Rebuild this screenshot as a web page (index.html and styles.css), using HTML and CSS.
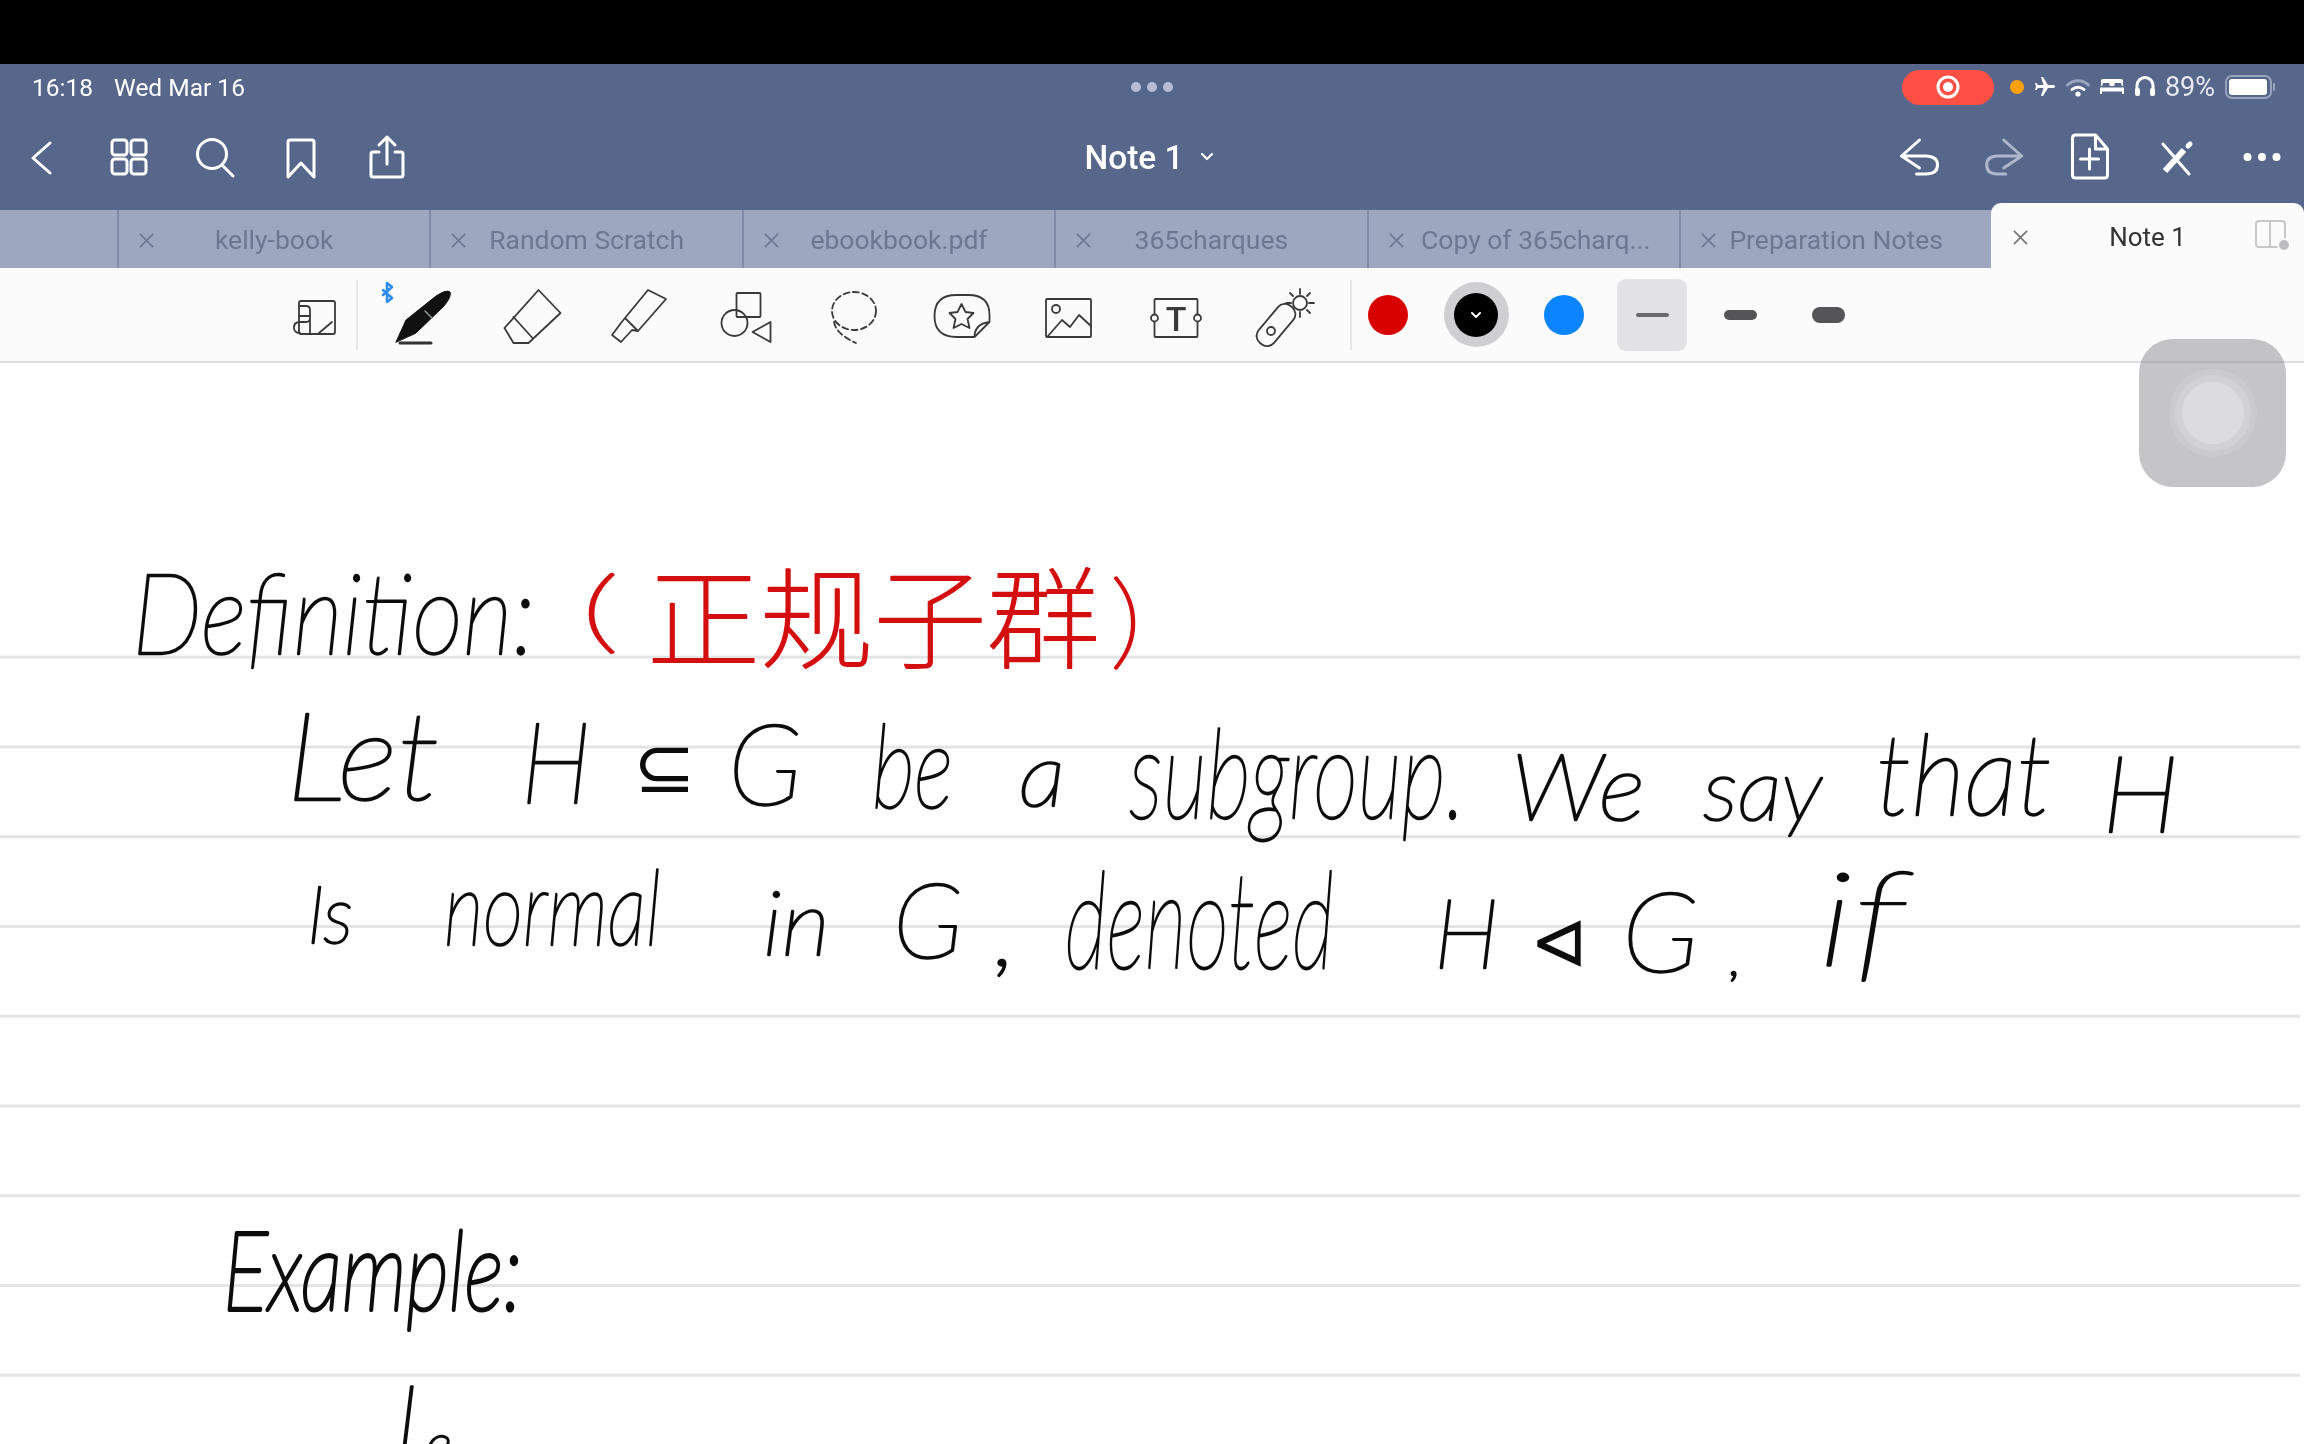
FILE: index.html
```html
<!DOCTYPE html>
<html lang="en">
<head>
<meta charset="utf-8">
<title>Note 1</title>
<link rel="stylesheet" href="styles.css">
</head>
<body>
<div class="screen">
  <div class="letterbox"></div>

  <header class="nav">
    <div class="status">
      <div class="status-left"><span>16:18</span><span>Wed Mar 16</span></div>
      <div class="grabber"><i></i><i></i><i></i></div>
      <div class="status-right">
        <div class="rec"><svg width="24" height="24" viewBox="0 0 24 24"><circle cx="12" cy="12" r="10" class="rec-ring"/><circle cx="12" cy="12" r="5" class="rec-dot"/></svg></div>
        <i class="cam-dot"></i>
        <svg class="st-icon" width="24" height="24" viewBox="0 0 24 24"><path transform="rotate(90 12 12)" fill="#fff" d="M21 16v-2l-8-5V3.5c0-.83-.67-1.5-1.5-1.5S10 2.67 10 3.5V9l-8 5v2l8-2.5V19l-2 1.5V22l3.5-1 3.5 1v-1.5L13 19v-5.5l8 2.5z"/></svg>
        <svg class="st-icon" width="24" height="22" viewBox="0 0 24 22"><path d="M1.5 9a15 15 0 0 1 21 0" class="wifi-dim"/><path d="M6 13.5a9 9 0 0 1 12 0" class="wifi"/><circle cx="12" cy="18" r="2.6" fill="#fff"/></svg>
        <svg class="st-icon" width="26" height="20" viewBox="0 0 26 20"><path fill="#fff" d="M4 2h18a2 2 0 0 1 2 2v5h-1l-1-3h-6l-1 3h-4l-1-3H4L3 9H2V4a2 2 0 0 1 2-2z"/><path fill="#fff" d="M1 10.500h24V17h-2v-2.500H3V17H1z"/></svg>
        <svg class="st-icon" width="22" height="24" viewBox="0 0 22 24"><path d="M3 17v-6.500a8 8 0 0 1 16 0V17" class="phones"/><rect x="1" y="13" width="5" height="8" rx="2" fill="#fff"/><rect x="16" y="13" width="5" height="8" rx="2" fill="#fff"/></svg>
        <span class="pct">89%</span>
        <svg class="battery" width="52" height="24" viewBox="0 0 52 24"><rect x="1" y="1" width="45" height="22" rx="6" class="batt-shell"/><rect x="4" y="4" width="38" height="16" rx="3" fill="#fff"/><path d="M49 9v6" class="batt-nub"/></svg>
      </div>
    </div>
    <div class="navrow">
      <div class="nav-left">
        <svg class="nav-icon back" viewBox="11 133 60 48"><path d="M50 143 33 158l17 15"/></svg>
        <svg class="nav-icon" viewBox="99 133 60 48"><rect x="112" y="140" width="15" height="15" rx="3"/><rect x="131" y="140" width="15" height="15" rx="3"/><rect x="112" y="159" width="15" height="15" rx="3"/><rect x="131" y="159" width="15" height="15" rx="3"/></svg>
        <svg class="nav-icon" viewBox="185 133 60 48"><circle cx="212" cy="154" r="14.500"/><path d="M222 165l11 11"/></svg>
        <svg class="nav-icon" viewBox="271 133 60 48"><path d="M288 177V142q0-2 2-2h22q2 0 2 2v35l-13-14z"/></svg>
        <svg class="nav-icon" viewBox="357 133 60 48"><path d="M379 152h-6q-2 0-2 2v21q0 2 2 2h28q2 0 2-2v-21q0-2-2-2h-6M387 164v-27M379 145l8-8 8 8"/></svg>
      </div>
      <div class="title"><span>Note 1</span><svg width="14" height="10" viewBox="0 0 14 10"><path d="M2 2l5 5 5-5"/></svg></div>
      <div class="nav-right">
        <svg class="nav-icon" viewBox="1888.500 133 60 48"><path d="M1919 140l-18 16 18 12M1901 156h24q12 0 12 9t-12 9h-9"/></svg>
        <svg class="nav-icon dim" viewBox="1974.300 133 60 48"><path d="M2004 140l18 16-18 12M2022 156h-24q-11 0-11 9t11 9h8"/></svg>
        <svg class="nav-icon" viewBox="2060.500 133 60 48"><path d="M2096 135h-20q-3 0-3 3v37q0 3 3 3h29q3 0 3-3v-26zM2096 135v14h12M2090 149v20M2081 159h18"/></svg>
        <svg class="nav-icon" viewBox="2145 133 60 48"><path d="M2162 144l26 30"/><path class="pen-stroke" d="M2164 171l19-21"/><path class="pen-tip" d="M2187 146l2-2"/></svg>
        <svg class="nav-icon filled" viewBox="2231.500 133 60 48"><circle cx="2247" cy="157" r="4"/><circle cx="2261.500" cy="157" r="4"/><circle cx="2276" cy="157" r="4"/></svg>
      </div>
    </div>
  </header>

  <nav class="tabs">
    <div class="tab-stub"></div>
    <div class="tab"><svg class="x" viewBox="0 0 16 16"><path d="M1 1l14 14M15 1 1 15"/></svg><span>kelly-book</span></div>
    <div class="tab"><svg class="x" viewBox="0 0 16 16"><path d="M1 1l14 14M15 1 1 15"/></svg><span>Random Scratch</span></div>
    <div class="tab"><svg class="x" viewBox="0 0 16 16"><path d="M1 1l14 14M15 1 1 15"/></svg><span>ebookbook.pdf</span></div>
    <div class="tab"><svg class="x" viewBox="0 0 16 16"><path d="M1 1l14 14M15 1 1 15"/></svg><span>365charques</span></div>
    <div class="tab long"><svg class="x" viewBox="0 0 16 16"><path d="M1 1l14 14M15 1 1 15"/></svg><span>Copy of 365charq...</span></div>
    <div class="tab"><svg class="x" viewBox="0 0 16 16"><path d="M1 1l14 14M15 1 1 15"/></svg><span>Preparation Notes</span></div>
    <div class="tab active"><svg class="x" viewBox="0 0 16 16"><path d="M1 1l14 14M15 1 1 15"/></svg><span>Note 1</span>
      <svg class="split" width="36" height="32" viewBox="0 0 36 32"><rect x="1" y="1" width="29" height="26" rx="3"/><path d="M15 1v26"/><circle cx="29" cy="25" r="6"/></svg>
    </div>
  </nav>

  <section class="toolbar">
    <svg class="tool tool-first" viewBox="272 275 84 80">
      <rect x="299" y="301" width="36" height="33" rx="2"/>
      <path d="M299 306h7q4 0 4 4v8q0 4-4 4h-6q-6 0-6 5.500t6 5.500M310 318v16M299 316h11M319 333l13-11"/>
    </svg>
    <i class="sep"></i>
    <div class="tools">
      <svg class="tool" viewBox="375 275 96 80">
        <path class="bt" d="M383 290l9 8-5 4V283l5 4-9 8"/>
        <path class="ink-fill" d="M396 342l10-22 30-24q11-7 14-4 2 4-6 14l-28 27z"/>
        <path class="pen-band" d="M425 311l7 7"/>
        <path class="pen-base" d="M400 343h31"/>
      </svg>
      <svg class="tool" viewBox="482.500 275 96 80">
        <path d="M538 290l22 23-32 30h-15l-9-15zM513 317l19 21"/>
      </svg>
      <svg class="tool" viewBox="590 275 96 80">
        <path d="M648 290l18 9-28 32-6-1-11 12-9-7 9-12 4-5zM625 318l13 13"/>
      </svg>
      <svg class="tool" viewBox="697.500 275 96 80">
        <rect x="736" y="293" width="24" height="24" rx="1"/><circle cx="734" cy="323" r="13"/><path d="M770 322v20l-18-10z"/>
      </svg>
      <svg class="tool" viewBox="805 275 96 80">
        <ellipse class="dash" cx="854" cy="311" rx="22" ry="19"/><path class="dash" d="M834 322q2 12 22 21"/>
      </svg>
      <svg class="tool" viewBox="912.500 275 96 80">
        <path d="M956 295h12q21 0 21 20v7l-15 15h-18q-22 0-22-21q0-21 22-21zM974 337q0-13 15-15"/>
        <path d="M961 304l4 8 8 1-6 6 2 9-8-4-8 4 2-9-6-6 8-1z"/>
      </svg>
      <svg class="tool" viewBox="1020 275 96 80">
        <rect x="1046" y="299" width="45" height="38" rx="1"/><circle cx="1056" cy="309" r="4"/><path d="M1048 336l14-16 8 7 9-12 12 11"/>
      </svg>
      <svg class="tool" viewBox="1127.500 275 96 80">
        <rect x="1154" y="299" width="43" height="38" rx="1"/><circle class="knob" cx="1154" cy="318" r="3.500"/><circle class="knob" cx="1197" cy="318" r="3.500"/>
        <text class="tool-t" x="1175.500" y="331">T</text>
      </svg>
      <svg class="tool" viewBox="1235 275 96 80">
        <rect x="-10" y="-24" width="20" height="48" rx="9" transform="translate(1276 325) rotate(40)"/>
        <circle cx="1271" cy="331" r="4"/><circle cx="1300" cy="303" r="7"/>
        <path d="M1300 289v5M1300 312v5M1286 303h5M1309 303h5M1290 293l3 3M1307 310l3 3M1310 293l-3 3"/>
      </svg>
    </div>
    <i class="sep sep-right"></i>
    <div class="swatches">
      <div class="swatch"><i class="dot red"></i></div>
      <div class="swatch"><i class="dot-ring"><i class="dot black"><svg width="12" height="8" viewBox="0 0 12 8"><path d="M2 2l4 4 4-4"/></svg></i></i></div>
      <div class="swatch"><i class="dot blue"></i></div>
      <div class="swatch selected"><i class="stroke thin"></i></div>
      <div class="swatch"><i class="stroke mid"></i></div>
      <div class="swatch"><i class="stroke thick"></i></div>
    </div>
  </section>

  <main class="canvas">
    <div class="ruled"></div>
    <svg class="ink" viewBox="0 363 2304 1081">
      <text x="132" y="654" textLength="403" lengthAdjust="spacingAndGlyphs" font-size="112">Definition:</text>
      <text class="red paren" x="581" y="642" textLength="38" lengthAdjust="spacingAndGlyphs" font-size="90">(</text>
      <text class="red cjk" x="647" y="660" textLength="453" lengthAdjust="spacingAndGlyphs" font-size="110">正规子群</text>
      <text class="red paren" x="1110" y="656" textLength="32" lengthAdjust="spacingAndGlyphs" font-size="105">)</text>

      <text x="286" y="800" textLength="154" lengthAdjust="spacingAndGlyphs" font-size="122">Let</text>
      <text x="521" y="803" textLength="70" lengthAdjust="spacingAndGlyphs" font-size="112">H</text>
      <text class="sym" x="633" y="792" textLength="63" lengthAdjust="spacingAndGlyphs" font-size="72">⊆</text>
      <text x="728" y="805" textLength="74" lengthAdjust="spacingAndGlyphs" font-size="112">G</text>
      <text x="872" y="808" textLength="81" lengthAdjust="spacingAndGlyphs" font-size="116">be</text>
      <text x="1019" y="806" textLength="46" lengthAdjust="spacingAndGlyphs" font-size="88">a</text>
      <text x="1129" y="818" textLength="336" lengthAdjust="spacingAndGlyphs" font-size="125">subgroup.</text>
      <text x="1511" y="820" textLength="134" lengthAdjust="spacingAndGlyphs" font-size="92">We</text>
      <text x="1703" y="820" textLength="119" lengthAdjust="spacingAndGlyphs" font-size="86">say</text>
      <text x="1876" y="815" textLength="176" lengthAdjust="spacingAndGlyphs" font-size="112">that</text>
      <text x="2102" y="832" textLength="77" lengthAdjust="spacingAndGlyphs" font-size="106">H</text>

      <text x="307" y="943" textLength="46" lengthAdjust="spacingAndGlyphs" font-size="80">Is</text>
      <text x="444" y="945" textLength="217" lengthAdjust="spacingAndGlyphs" font-size="104">normal</text>
      <text x="763" y="955" textLength="67" lengthAdjust="spacingAndGlyphs" font-size="90">in</text>
      <text x="893" y="958" textLength="70" lengthAdjust="spacingAndGlyphs" font-size="105">G</text>
      <text x="995" y="965" textLength="21" lengthAdjust="spacingAndGlyphs" font-size="90">,</text>
      <text x="1065" y="968" textLength="269" lengthAdjust="spacingAndGlyphs" font-size="135">denoted</text>
      <text x="1434" y="968" textLength="65" lengthAdjust="spacingAndGlyphs" font-size="96">H</text>
      <text class="sym" x="1530" y="968" textLength="58" lengthAdjust="spacingAndGlyphs" font-size="78">⊲</text>
      <text x="1622" y="972" textLength="77" lengthAdjust="spacingAndGlyphs" font-size="110">G</text>
      <text x="1730" y="975" textLength="11" lengthAdjust="spacingAndGlyphs" font-size="50">,</text>
      <text x="1818" y="965" textLength="88" lengthAdjust="spacingAndGlyphs" font-size="130">if</text>

      <text class="heavy" x="223" y="1310" textLength="299" lengthAdjust="spacingAndGlyphs" font-size="110">Example:</text>
      <text x="392" y="1471" font-size="120">L</text>
      <text x="425" y="1465" font-size="58">e</text>
    </svg>
  </main>

  <div class="assist"><i class="assist-core"></i></div>
</div>
</body>
</html>
```

FILE: styles.css
```css
* { box-sizing: border-box; }
html, body { margin: 0; padding: 0; background: #fff; }
i { display: block; font-style: normal; }

.screen {
  position: relative;
  width: 2304px;
  height: 1444px;
  overflow: hidden;
  display: flex;
  flex-direction: column;
  font-family: Roboto, "Liberation Sans", sans-serif;
  filter: blur(0.5px);
}

.letterbox { height: 64px; background: #000; flex: none; }

/* Navigation */
.nav { height: 146px; background: #57678b; color: #fff; flex: none; }

.status {
  height: 46px;
  display: grid;
  grid-template-columns: 1fr auto 1fr;
  align-items: center;
}
.status-left { display: flex; gap: 21px; padding-left: 32px; font-size: 24.500px; }
.grabber { display: flex; gap: 6px; }
.grabber i { width: 10px; height: 10px; border-radius: 50%; background: #b4bdd4; }
.status-right {
  display: flex;
  align-items: center;
  justify-content: flex-end;
  gap: 9px;
  padding-right: 27px;
}
.rec {
  width: 92px;
  height: 35px;
  border-radius: 18px;
  background: #ff5045;
  display: flex;
  align-items: center;
  justify-content: center;
  margin-right: 7px;
}
.rec-ring { fill: none; stroke: #fff; stroke-width: 3; }
.rec-dot { fill: #fff; }
.cam-dot { width: 14px; height: 14px; border-radius: 50%; background: #ff9f0a; }
.st-icon { flex: none; }
.wifi, .wifi-dim, .phones { fill: none; stroke: #fff; stroke-width: 3; stroke-linecap: round; }
.wifi-dim { stroke: #9aa5c0; }
.pct { font-size: 27px; color: #e6e9f1; }
.battery { margin-left: 1px; }
.batt-shell { fill: none; stroke: #98a3bd; stroke-width: 2; }
.batt-nub { stroke: #98a3bd; stroke-width: 2; stroke-linecap: round; }

.navrow {
  height: 94px;
  display: grid;
  grid-template-columns: 1fr auto 1fr;
  align-items: center;
}
.nav-left { display: flex; gap: 26px; padding-left: 11px; }
.nav-right { display: flex; gap: 25.7px; justify-content: flex-end; padding-right: 12.5px; }
.nav-icon {
  width: 60px;
  height: 48px;
  flex: none;
  fill: none;
  stroke: #fff;
  stroke-width: 3;
  stroke-linecap: round;
  stroke-linejoin: round;
}
.nav-icon.back { margin-right: 2px; }
.nav-icon.dim { stroke: #aeb6cb; }
.nav-icon.filled { fill: #fff; stroke: none; }
.pen-stroke { stroke-width: 6; stroke-linecap: butt; }
.pen-tip { stroke-width: 5; }
.title {
  display: flex;
  align-items: center;
  gap: 16px;
  font-size: 33.500px;
  font-weight: 500;
  margin-right: 6px;
}
.title svg { fill: none; stroke: #fff; stroke-width: 2.200; stroke-linecap: round; stroke-linejoin: round; }

/* Tabs */
.tabs {
  height: 58px;
  flex: none;
  display: flex;
  align-items: flex-end;
  background: #9da8c0;
  font-size: 26.500px;
  color: #6c7790;
}
.tab-stub { width: 117px; height: 58px; flex: none; }
.tab {
  position: relative;
  width: 312.400px;
  height: 58px;
  flex: none;
  display: flex;
  align-items: center;
  justify-content: center;
  white-space: nowrap;
  border-left: 2px solid #7f8ba8;
}
.tab.long { padding-left: 24px; }
.x {
  position: absolute;
  left: 20px;
  top: 23px;
  width: 15px;
  height: 15px;
  fill: none;
  stroke: #6c7790;
  stroke-width: 1.800;
}
.tab.active {
  height: 65px;
  border-left: 0;
  border-radius: 10px 10px 0 0;
  background: #fbfbfc;
  color: #333;
  padding-top: 2px;
  font-size: 26px;
}
.tab.active .x { left: 22px; top: 27px; stroke: #777; }
.split {
  position: absolute;
  right: 13px;
  top: 17px;
  fill: none;
  stroke: #c8c8cb;
  stroke-width: 2;
}
.split circle { fill: #bdbdc0; stroke: #fbfbfc; }

/* Toolbar */
.toolbar {
  height: 95px;
  flex: none;
  display: flex;
  align-items: center;
  padding-left: 272px;
  background: #fbfbfc;
  border-bottom: 2px solid #dfdfe2;
}
.tool {
  width: 96px;
  height: 80px;
  flex: none;
  fill: none;
  stroke: #3a3a3c;
  stroke-width: 1.800;
  stroke-linejoin: round;
  stroke-linecap: round;
}
.tool-first { width: 84px; }
.tools { display: flex; gap: 11.500px; margin-left: 17px; }
.sep { width: 2px; height: 70px; flex: none; background: #e7e7e9; }
.sep-right { margin-left: 19px; }
.bt { stroke: #2a8cf0; stroke-width: 2.500; }
.ink-fill { fill: #111; stroke: #111; stroke-width: 1; }
.pen-band { stroke: #8b9a97; stroke-width: 1.500; }
.pen-base { stroke: #333; stroke-width: 3; }
.dash { stroke-dasharray: 6 3.500; stroke-width: 1.800; }
.knob { fill: #fbfbfc; }
.tool-t {
  font-family: Roboto, sans-serif;
  font-size: 34px;
  font-weight: 500;
  text-anchor: middle;
  fill: #3a3a3c;
  stroke: none;
}
.swatches { display: flex; gap: 18px; margin-left: 1px; }
.swatch {
  width: 70px;
  height: 72px;
  display: flex;
  align-items: center;
  justify-content: center;
  border-radius: 9px;
}
.swatch.selected { background: #e2e2e5; }
.dot { width: 40px; height: 40px; border-radius: 50%; }
.red { background: #d90000; }
.blue { background: #0a84ff; }
.dot-ring {
  width: 65px;
  height: 65px;
  border-radius: 50%;
  background: #cfcfd1;
  display: flex;
  align-items: center;
  justify-content: center;
}
.dot.black {
  width: 44px;
  height: 44px;
  background: #000;
  display: flex;
  align-items: center;
  justify-content: center;
}
.dot.black svg { fill: none; stroke: #fff; stroke-width: 2; stroke-linecap: round; stroke-linejoin: round; }
.stroke { width: 33px; background: #555558; border-radius: 8px; }
.stroke.thin { height: 4px; background: #6a6a6c; }
.stroke.mid { height: 10px; }
.stroke.thick { height: 16px; }

/* Note canvas */
.canvas {
  position: relative;
  flex: 1;
  min-height: 0;
  background: #fff;
  overflow: hidden;
  padding: 206.250px 4px 0 0;
}
.ruled {
  height: 100%;
  background-image: linear-gradient(to bottom, transparent 86.750px, #e3e4e6 86.750px);
  background-size: 100% 89.750px;
}
.ink {
  position: absolute;
  left: 0;
  top: 0;
  width: 2304px;
  height: 1081px;
}
.ink text {
  font-family: Lato, "DejaVu Sans", sans-serif;
  font-style: italic;
  font-weight: 100;
  fill: #0c0c0c;
  stroke: #0c0c0c;
  stroke-width: 2.400;
  stroke-linejoin: round;
}
.ink .sym { font-family: "DejaVu Sans", sans-serif; font-style: normal; font-weight: 400; stroke-width: 0; }
.ink .red { fill: #d40f0f; stroke: #d40f0f; }
.ink .paren { font-style: normal; stroke-width: 2.400; }
.ink .cjk { font-family: "Noto Sans CJK SC", sans-serif; font-style: normal; font-weight: 100; stroke-width: 1.800; }
.ink .heavy { stroke-width: 4; }

/* Floating assistive button */
.assist {
  position: absolute;
  left: 2139px;
  top: 339px;
  width: 147px;
  height: 148px;
  border-radius: 34px;
  background: rgba(140, 140, 144, 0.5);
  display: flex;
  align-items: center;
  justify-content: center;
}
.assist-core {
  width: 62px;
  height: 62px;
  border-radius: 50%;
  background: #dcdcde;
  box-shadow: 0 0 0 7px #d2d2d4, 0 0 0 13px #cbcbcd;
}
```
